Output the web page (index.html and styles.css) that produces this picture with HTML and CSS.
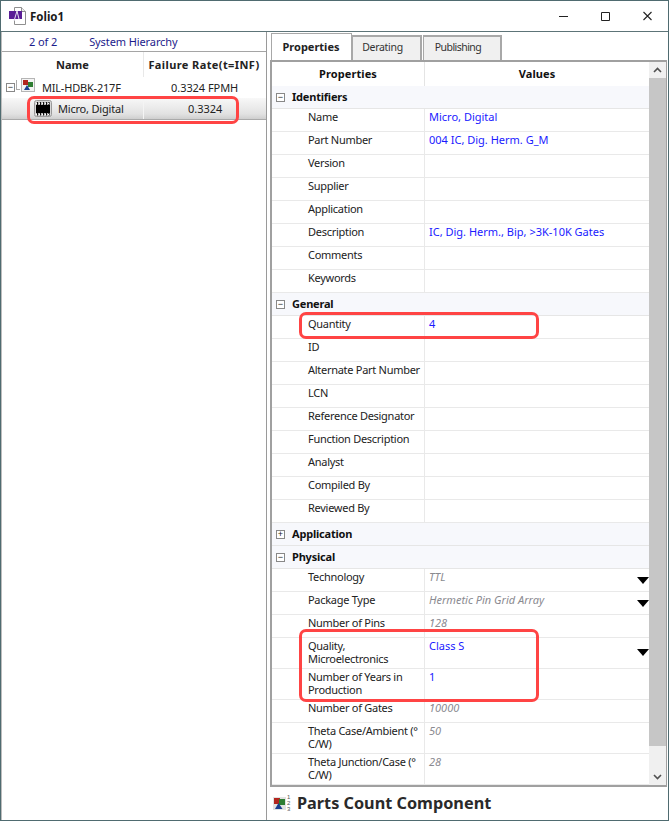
FILE: index.html
```html
<!DOCTYPE html>
<html lang="en">
<head>
<meta charset="utf-8">
<title>Folio1</title>
<link rel="stylesheet" href="styles.css">
</head>
<body>
<div class="window">
  <header class="titlebar">
    <svg class="app-icon" width="17" height="18" viewBox="0 0 17 18"><path d="M5.500 .5h7l4 4v13h-11z" fill="#fff" stroke="#8f8f8f"/><path d="M12.500 .5v4h4" fill="#eee" stroke="#8f8f8f"/><rect x="0" y="4" width="13" height="8" fill="#5a1e96"/><path d="M5 14l3-10 2 8" fill="none" stroke="#e9e4f2" stroke-width="1"/></svg>
    <span class="title">Folio1</span>
    <div class="controls">
      <svg width="10" height="10" viewBox="0 0 10 10"><path d="M0 5.500h9" stroke="#222" fill="none"/></svg>
      <svg width="10" height="10" viewBox="0 0 10 10"><path d="M.5 1.500h8v8h-8z" stroke="#222" fill="none"/></svg>
      <svg width="10" height="10" viewBox="0 0 10 10"><path d="M.5 1l8 8M8.500 1l-8 8" stroke="#222" fill="none" stroke-width="1.100"/></svg>
    </div>
  </header>
  <div class="main">
    <section class="left">
      <div class="crumbs"><span class="count">2 of 2</span><span>System Hierarchy</span></div>
      <div class="tree-head"><div class="c-name">Name</div><div class="c-rate">Failure Rate(t=INF)</div></div>
      <div class="tree-row">
        <span class="box">−</span>
        <span class="elbow"></span>
        <svg class="sys-icon" width="14" height="14" viewBox="0 0 14 14"><rect x=".5" y=".5" width="13" height="13" fill="#f4f4f4" stroke="#b5b5b5"/><rect x="2" y="2" width="5" height="5" fill="#b3261e"/><rect x="7" y="4" width="5" height="5" fill="#2e7d32"/><path d="M3 12l3-5 3 5z" fill="#1b3f8f"/></svg>
        <span class="tree-name">MIL-HDBK-217F</span>
        <span class="tree-rate">0.3324 FPMH</span>
      </div>
      <div class="tree-row selected">
        <svg class="chip" width="18" height="17" viewBox="0 0 18 17"><rect x=".5" y=".5" width="17" height="16" rx="2" fill="#d8d8d8" stroke="#9a9a9a"/><rect x="2" y="5" width="14" height="8" fill="#000"/><path d="M3.500 2v3M6.500 2v3M9.500 2v3M12.500 2v3M15 2v3M3.500 13v2.500M6.500 13v2.500M9.500 13v2.500M12.500 13v2.500M15 13v2.500" stroke="#111" stroke-width="1.300"/><path d="M2 3.500h14M2 14.500h14" stroke="#fff" stroke-width="1" stroke-dasharray="1 2"/></svg>
        <span class="sel-name">Micro, Digital</span>
        <span class="sel-rate">0.3324</span>
      </div>
      <div class="mark mark-left"></div>
    </section>
    <section class="right">
      <nav class="tabs">
        <div class="tab active">Properties</div>
        <div class="tab t-derating">Derating</div>
        <div class="tab t-publishing">Publishing</div>
      </nav>
      <div class="grid-frame">
        <div class="grid">
          <div class="g-head"><div class="k">Properties</div><div class="v">Values</div></div>
          <div class="sec"><span class="box">−</span>Identifiers</div>
          <div class="row"><div class="k">Name</div><div class="v blue">Micro, Digital</div></div>
          <div class="row"><div class="k">Part Number</div><div class="v blue">004 IC, Dig. Herm. G_M</div></div>
          <div class="row"><div class="k">Version</div><div class="v"></div></div>
          <div class="row"><div class="k">Supplier</div><div class="v"></div></div>
          <div class="row"><div class="k">Application</div><div class="v"></div></div>
          <div class="row"><div class="k">Description</div><div class="v blue">IC, Dig. Herm., Bip, &gt;3K-10K Gates</div></div>
          <div class="row"><div class="k">Comments</div><div class="v"></div></div>
          <div class="row"><div class="k">Keywords</div><div class="v"></div></div>
          <div class="sec"><span class="box">−</span>General</div>
          <div class="row"><div class="k">Quantity</div><div class="v blue">4</div></div>
          <div class="row"><div class="k">ID</div><div class="v"></div></div>
          <div class="row"><div class="k">Alternate Part Number</div><div class="v"></div></div>
          <div class="row"><div class="k">LCN</div><div class="v"></div></div>
          <div class="row"><div class="k">Reference Designator</div><div class="v"></div></div>
          <div class="row"><div class="k">Function Description</div><div class="v"></div></div>
          <div class="row"><div class="k">Analyst</div><div class="v"></div></div>
          <div class="row"><div class="k">Compiled By</div><div class="v"></div></div>
          <div class="row"><div class="k">Reviewed By</div><div class="v"></div></div>
          <div class="sec"><span class="box">+</span>Application</div>
          <div class="sec"><span class="box">−</span>Physical</div>
          <div class="row"><div class="k">Technology</div><div class="v gray">TTL<i class="drop"></i></div></div>
          <div class="row"><div class="k">Package Type</div><div class="v gray">Hermetic Pin Grid Array<i class="drop"></i></div></div>
          <div class="row"><div class="k">Number of Pins</div><div class="v gray">128</div></div>
          <div class="row tall"><div class="k">Quality,<br>Microelectronics</div><div class="v blue">Class S<i class="drop mid"></i></div></div>
          <div class="row tall"><div class="k">Number of Years in<br>Production</div><div class="v blue">1</div></div>
          <div class="row"><div class="k">Number of Gates</div><div class="v gray">10000</div></div>
          <div class="row tall"><div class="k">Theta Case/Ambient (°<br>C/W)</div><div class="v gray">50</div></div>
          <div class="row tall"><div class="k">Theta Junction/Case (°<br>C/W)</div><div class="v gray">28</div></div>
        </div>
        <div class="scrollbar">
          <svg class="arrow" width="17" height="16" viewBox="0 0 17 16"><path d="M5 10l3.500-3.500L12 10" fill="none" stroke="#505050" stroke-width="1.600"/></svg>
          <div class="thumb"></div>
          <div class="track"></div>
          <svg class="arrow" width="17" height="16" viewBox="0 0 17 16"><path d="M5 6l3.500 3.500L12 6" fill="none" stroke="#505050" stroke-width="1.600"/></svg>
        </div>
        <div class="mark mark-qty"></div>
        <div class="mark mark-phys"></div>
      </div>
      <footer class="status">
        <svg width="19" height="18" viewBox="0 0 19 18"><rect x="0" y="3" width="13" height="13" fill="#e2e2e2"/><rect x="1" y="4" width="6" height="6" fill="#b3261e"/><rect x="6" y="5" width="6" height="6" fill="#2e7d32"/><path d="M2 15l3.500-6 4 6z" fill="#1b3f8f"/><text class="nums" x="14" y="5">1</text><text class="nums" x="14" y="11">2</text><text class="nums" x="14" y="17">3</text></svg>
        <span class="status-text">Parts Count Component</span>
      </footer>
    </section>
  </div>
</div>
</body>
</html>
```
FILE: styles.css
```css
* { box-sizing: border-box; }
html, body { margin: 0; padding: 0; background: #fff; }
body { font-family: "Noto Sans", "Open Sans", sans-serif; font-size: 11px; color: #222; }
.window { width: 669px; height: 821px; border: 1px solid #4f6b70; display: flex; flex-direction: column; overflow: hidden; }
.titlebar { height: 31px; flex: none; display: flex; align-items: center; padding: 0 0 0 8px; border-bottom: 1px solid #5d7478; }
.app-icon { margin-right: 4px; }
.title { font-weight: 700; font-size: 11.500px; color: #1a1a1a; }
.controls { margin-left: auto; display: flex; gap: 32px; padding-right: 15px; }
.main { flex: 1; display: flex; min-height: 0; }

.left { width: 266px; flex: none; position: relative; border-right: 1px solid #9a9a9a; border-left: 1px solid #bdbdbd; }
.crumbs { height: 20px; display: flex; align-items: center; padding-left: 27px; gap: 32px; color: #1c1c8c; border-bottom: 1px solid #a5a5a5; letter-spacing: -.1px; }
.tree-head { height: 25px; display: flex; font-weight: 700; color: #222; align-items: center; }
.c-name { width: 141px; text-align: center; }
.c-rate { flex: 1; text-align: center; height: 25px; line-height: 25px; border-left: 1px solid #e8e8e8; white-space: nowrap; letter-spacing: .4px; padding-right: 2px; }
.tree-row { height: 21px; display: flex; align-items: center; position: relative; letter-spacing: -.2px; }
.tree-row .box { margin-left: 4px; }
.elbow { width: 4px; height: 10px; flex: none; margin: -6px 0 0 1px; border-left: 1px solid #aaa; border-bottom: 1px solid #aaa; }
.sys-icon { margin: -6px 0 0 1px; }
.tree-name { margin-left: 7px; width: 104px; white-space: nowrap; }
.tree-rate { margin-left: 25px; white-space: nowrap; letter-spacing: -.05px; }
.selected { height: 22px; background: linear-gradient(#f8f8f8, #e2e2e2 75%, #cfcfcf); border-bottom: 1px solid #aaa; }
.chip { margin-left: 32px; }
.sel-name { margin-left: 6px; width: 86px; height: 21px; line-height: 21px; white-space: nowrap; border-right: 1px solid #f4f4f4; }
.sel-rate { margin-left: 44px; letter-spacing: 0; }

.right { flex: 1; display: flex; flex-direction: column; min-width: 0; padding: 0 1px 0 3px; }
.tabs { height: 28px; flex: none; display: flex; align-items: flex-end; padding-left: 1px; }
.tab { height: 25px; width: 70px; background: #f0f0f0; border: 2px solid #a8a8a8; border-left-width: 1px; border-bottom: 0; text-align: center; line-height: 21px; color: #333; font-size: 10.500px; letter-spacing: -.3px; padding-right: 8px; }
.tab.active { height: 27px; width: 81px; background: #fff; font-weight: 700; font-size: 11px; letter-spacing: 0; color: #222; line-height: 26px; border-width: 1px 1px 0; padding-right: 1px; }
.t-publishing { width: 79px; margin-left: 1px; letter-spacing: -.55px; }
.grid-frame { flex: none; height: 727px; display: flex; position: relative; border: 2px solid #a0a0a0; border-right-width: 1px; }
.grid { width: 377px; flex: none; overflow: hidden; }
.g-head { display: flex; height: 24px; line-height: 24px; font-weight: 700; text-align: center; color: #111; letter-spacing: .1px; }
.g-head .k { width: 153px; border-right: 1px solid #e4e4e4; }
.g-head .v { flex: 1; }
.sec { height: 23px; background: #f7f8fc; border-bottom: 1px solid #e6e6e6; display: flex; align-items: center; font-weight: 700; font-size: 11px; letter-spacing: -.2px; color: #111; padding: 0 0 2px 4px; }
.sec .box { margin: 2px 7px 0 0; }
.box { width: 9px; height: 9px; flex: none; border: 1px solid #888; background: #fff; display: inline-flex; align-items: center; justify-content: center; font: 400 9px/1 "Liberation Sans", sans-serif; letter-spacing: 0; color: #222; }
.row { display: flex; height: 23px; border-bottom: 1px solid #e9e9e9; }
.row.tall { height: 31px; }
.row .k { width: 153px; flex: none; padding: 1px 0 0 36px; line-height: 13px; border-right: 1px solid #e9e9e9; white-space: nowrap; color: #222; letter-spacing: -.28px; }
.row .v { flex: 1; padding: 1px 0 0 4px; line-height: 13px; position: relative; white-space: nowrap; }
.blue { color: #1a1aff; }
.gray { color: #8a8a90; font-style: italic; }
.drop { position: absolute; right: 0; top: 8px; width: 0; height: 0; border-left: 6px solid transparent; border-right: 6px solid transparent; border-top: 7px solid #000; }
.drop.mid { top: 11px; }
.scrollbar { flex: 1; display: flex; flex-direction: column; background: #f0f0f0; }
.arrow { flex: none; display: block; }
.thumb { height: 668px; background: #c6c6c6; flex: none; }
.track { flex: 1; }
.status { flex: 1; display: flex; align-items: center; padding: 0 0 1px 3px; gap: 5px; }
.status-text { font-size: 16.250px; font-weight: 700; color: #2a2a2a; white-space: nowrap; }
.nums { font-size: 6px; fill: #555; font-family: "Liberation Sans", sans-serif; }

.mark { position: absolute; border: 3px solid #ff4444; border-radius: 7px; pointer-events: none; }
.mark-left { left: 25px; top: 64px; width: 212px; height: 28px; }
.mark-qty { left: 27px; top: 250px; width: 240px; height: 27px; }
.mark-phys { left: 27px; top: 567px; width: 240px; height: 73px; }
```
